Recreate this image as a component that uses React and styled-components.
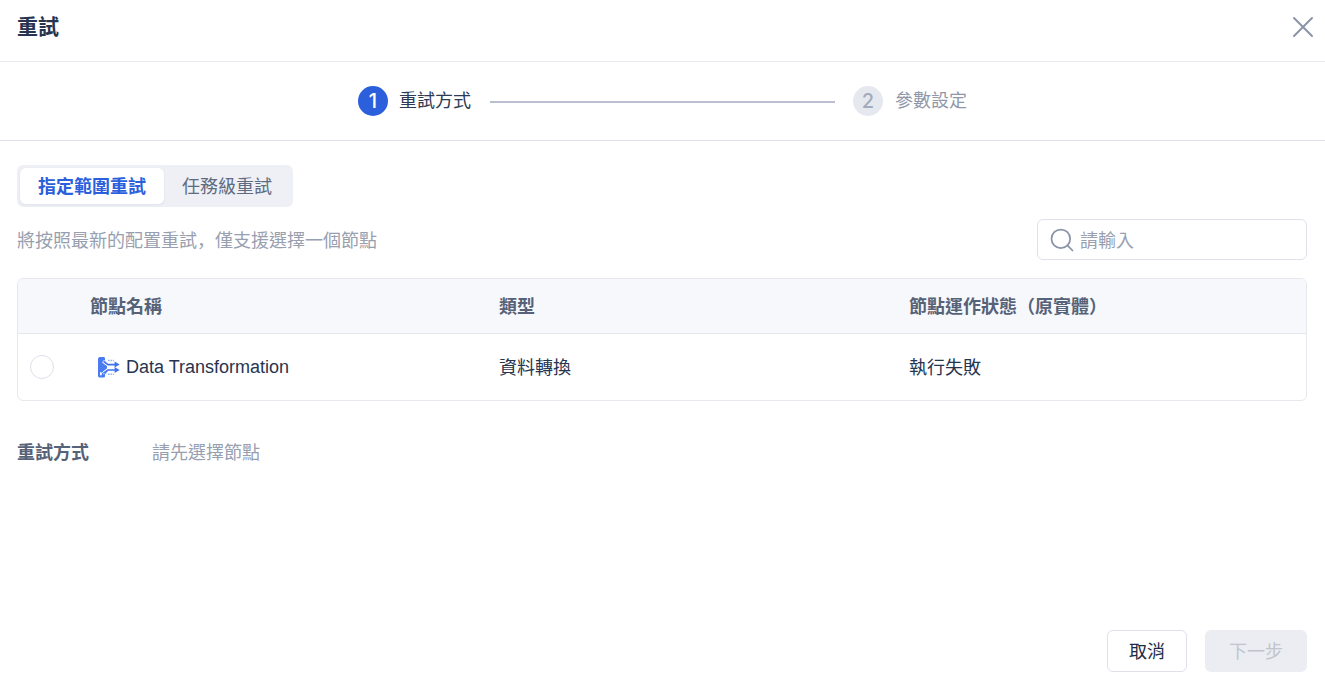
import styled, { createGlobalStyle } from 'styled-components'
import { X, Search } from 'lucide-react'

const GlobalStyle = createGlobalStyle`
    html, body {
        margin: 0;
        padding: 0;
        background: #fff;
    }
    body {
        font-family: "Liberation Sans", "Noto Sans CJK TC", sans-serif;
        color: #1e2b45;
    }
`

function NodeIcon() {
    return <svg width="22" height="21" viewBox="0 0 22 21" fill="none">
        <path d="M0 2C0 1 .8 0 2 0H5.5C6.4 0 7 .7 7 1.6V3.4L9 5.2V15.8L7 17.6V19C7 20 6.3 20.6 5.4 20.6H2C.8 20.6 0 19.8 0 18.8Z" fill="#4a7bf0" />
        <path d="M5 4.2L10 8H16" stroke="#fff" strokeWidth="3" />
        <path d="M5 16.4L10 12.6H16" stroke="#fff" strokeWidth="3" />
        <path d="M5.5 4.4L10 7.6H18" stroke="#3f72ee" strokeWidth="1.7" />
        <path d="M5.5 16.2L10 13H18" stroke="#3f72ee" strokeWidth="1.7" />
        <path d="M16.6 4.6L21.6 7.6L16.6 10.6Z" fill="#3f72ee" />
        <path d="M16.6 10L21.6 13L16.6 16Z" fill="#3f72ee" />
        <path d="M10 3.4H16" stroke="#8fb0f6" strokeWidth="1.5" strokeDasharray="1.6 1" />
        <path d="M10 17.2H16" stroke="#8fb0f6" strokeWidth="1.5" strokeDasharray="1.6 1" />
        <rect x="2" y="15" width="1.8" height="3.4" rx="0.9" fill="#fff" />
    </svg>
}

export default function App() {
    return <Dialog>
        <GlobalStyle />
        <Header>
            <Title>重試</Title>
            <CloseButton><X size={36} strokeWidth={1.3} /></CloseButton>
        </Header>
        <Steps>
            <StepDot $active>1</StepDot>
            <StepLabel $active>重試方式</StepLabel>
            <StepLine />
            <StepDot>2</StepDot>
            <StepLabel>參數設定</StepLabel>
        </Steps>
        <Body>
            <Tabs>
                <Tab $active>指定範圍重試</Tab>
                <Tab>任務級重試</Tab>
            </Tabs>
            <Toolbar>
                <Hint>將按照最新的配置重試<Comma>，</Comma>僅支援選擇一個節點</Hint>
                <SearchBox>
                    <Search size={28} strokeWidth={1.5} color="#8a94a8" />
                    <SearchText>請輸入</SearchText>
                </SearchBox>
            </Toolbar>
            <Table>
                <HeadRow>
                    <span />
                    <HeadCell>節點名稱</HeadCell>
                    <HeadCell>類型</HeadCell>
                    <HeadCell>節點運作狀態（原實體）</HeadCell>
                </HeadRow>
                <DataRow>
                    <Radio />
                    <NameCell><NodeIcon />Data Transformation</NameCell>
                    <TextCell>資料轉換</TextCell>
                    <TextCell>執行失敗</TextCell>
                </DataRow>
            </Table>
            <Field>
                <FieldLabel>重試方式</FieldLabel>
                <FieldValue>請先選擇節點</FieldValue>
            </Field>
        </Body>
        <Footer>
            <CancelButton>取消</CancelButton>
            <NextButton disabled>下一步</NextButton>
        </Footer>
    </Dialog>
}

const Dialog = styled.div`
    width: 1325px;
    height: 686px;
    display: flex;
    flex-direction: column;
    overflow: hidden;
    background: #fff;
`

const Header = styled.div`
    height: 62px;
    flex-shrink: 0;
    display: flex;
    align-items: center;
    justify-content: space-between;
    padding: 0 4px 7px 17px;
    box-sizing: border-box;
    border-bottom: 1px solid #e9ebf0;
`

const Title = styled.div`
    font-size: 21px;
    font-weight: 700;
    line-height: 28px;
    color: #27344f;
`

const CloseButton = styled.div`
    display: flex;
    color: #8a94a6;
`

const Steps = styled.div`
    height: 79px;
    flex-shrink: 0;
    box-sizing: border-box;
    border-bottom: 1px solid #dfe2ea;
    display: flex;
    align-items: center;
    padding: 0 0 0 358px;
`

const StepDot = styled.div`
    width: 30px;
    height: 30px;
    border-radius: 50%;
    display: flex;
    align-items: center;
    justify-content: center;
    font-family: Inter, sans-serif;
    font-size: 20px;
    font-weight: 500;
    background: ${props => props.$active ? '#2b5fdc' : '#e6e8f0'};
    color: ${props => props.$active ? '#fff' : '#a3abbc'};
`

const StepLabel = styled.div`
    margin-left: ${props => props.$active ? '11px' : '12px'};
    font-size: 18px;
    line-height: 26px;
    color: ${props => props.$active ? '#2c3a55' : '#8f97a8'};
`

const StepLine = styled.div`
    width: 345px;
    height: 2px;
    margin: 2px 18px 0 19px;
    background: #b9bfce;
`

const Body = styled.div`
    flex: 1;
    padding: 24px 18px 0 17px;
    display: flex;
    flex-direction: column;
    align-items: stretch;
`

const Tabs = styled.div`
    align-self: flex-start;
    display: flex;
    box-sizing: border-box;
    height: 42px;
    padding: 3px;
    background: #eef0f6;
    border-radius: 6px;
`

const Tab = styled.div`
    box-sizing: border-box;
    width: ${props => props.$active ? '144px' : '126px'};
    padding-bottom: 2px;
    display: flex;
    align-items: center;
    justify-content: center;
    font-size: 18px;
    font-weight: ${props => props.$active ? 700 : 400};
    color: ${props => props.$active ? '#2b5fdc' : '#5f6b80'};
    background: ${props => props.$active ? '#fff' : 'transparent'};
    border-radius: 6px;
    box-shadow: ${props => props.$active ? '0 1px 3px rgba(40, 50, 80, 0.08)' : 'none'};
`

const Toolbar = styled.div`
    margin-top: 12px;
    display: flex;
    align-items: center;
    justify-content: space-between;
`

const Hint = styled.div`
    font-size: 18px;
    padding-bottom: 2px;
    color: #98a0b0;
`

const Comma = styled.span`
    font-family: "Noto Sans CJK SC", sans-serif;
`

const SearchBox = styled.div`
    width: 270px;
    height: 41px;
    box-sizing: border-box;
    border: 1px solid #dfe2ea;
    border-radius: 6px;
    display: flex;
    align-items: center;
    gap: 4px;
    padding-left: 10px;
`

const SearchText = styled.span`
    font-size: 18px;
    padding-bottom: 2px;
    color: #98a0b0;
`

const Table = styled.div`
    margin-top: 18px;
    border: 1px solid #e6e8ee;
    border-radius: 6px;
    overflow: hidden;
`

const columns = '72px 409px 410px 1fr'

const HeadRow = styled.div`
    height: 55px;
    box-sizing: border-box;
    display: grid;
    grid-template-columns: ${columns};
    align-items: center;
    background: #f7f8fc;
    border-bottom: 1px solid #e6e8ee;
`

const HeadCell = styled.span`
    font-size: 18px;
    font-weight: 700;
    padding-bottom: 2px;
    color: #566278;
`

const DataRow = styled.div`
    height: 66px;
    display: grid;
    grid-template-columns: ${columns};
    align-items: center;
    font-size: 18px;
    color: #27344f;
`

const Radio = styled.span`
    width: 24px;
    height: 24px;
    box-sizing: border-box;
    margin-left: 12px;
    border: 1px solid #dde0e9;
    border-radius: 50%;
`

const NameCell = styled.span`
    display: flex;
    align-items: center;
    gap: 6px;
    padding-left: 8px;
`

const TextCell = styled.span`
    padding-bottom: 2px;
`

const Field = styled.div`
    margin-top: 39px;
    display: flex;
    align-items: center;
    font-size: 18px;
    line-height: 26px;
`

const FieldLabel = styled.span`
    width: 135px;
    font-weight: 700;
    color: #566278;
`

const FieldValue = styled.span`
    color: #98a0b0;
`

const Footer = styled.div`
    display: flex;
    justify-content: flex-end;
    gap: 18px;
    padding: 0 18px 14px 0;
`

const CancelButton = styled.button`
    width: 80px;
    height: 42px;
    box-sizing: border-box;
    padding: 0 0 2px;
    border: 1px solid #dfe2ea;
    border-radius: 6px;
    background: #fff;
    font-family: inherit;
    font-size: 18px;
    color: #1e2b45;
`

const NextButton = styled.button`
    width: 102px;
    height: 42px;
    padding: 0 0 2px;
    border: none;
    border-radius: 6px;
    background: #ebedf2;
    font-family: inherit;
    font-size: 18px;
    color: #c0c4cd;
`
